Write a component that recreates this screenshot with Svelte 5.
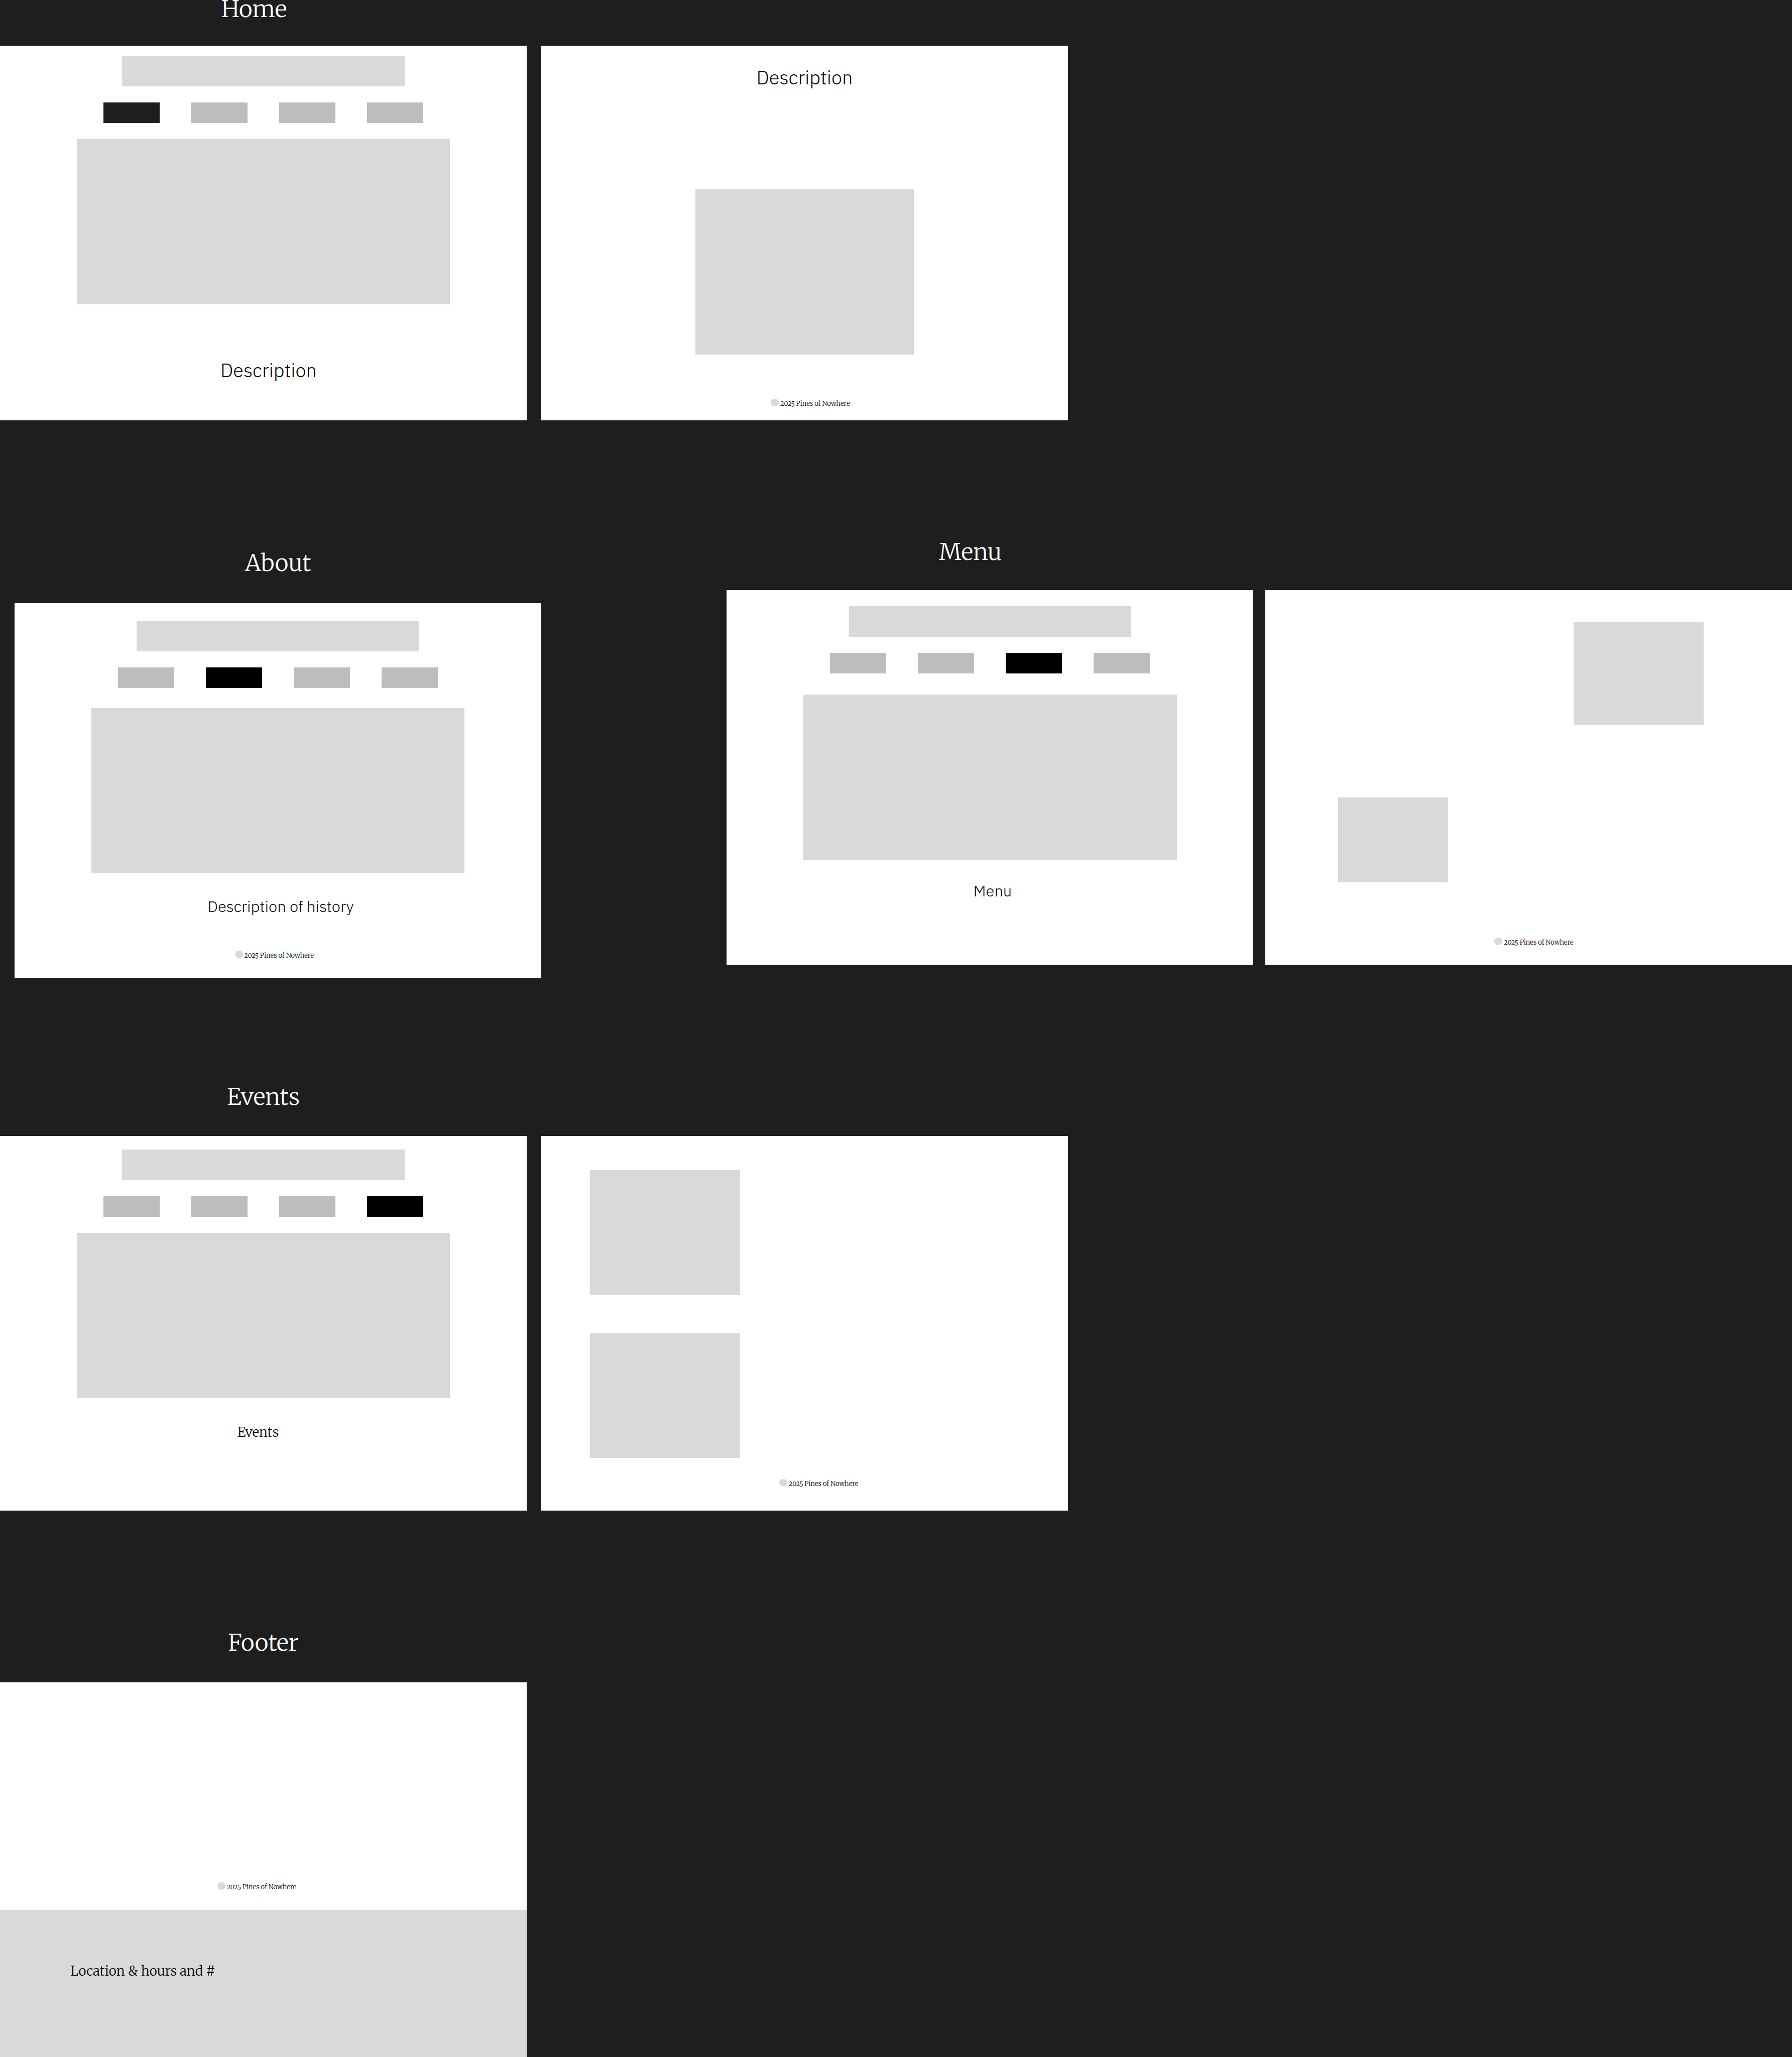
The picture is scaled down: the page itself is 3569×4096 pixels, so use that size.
<script>
  const pages = ['Home', 'About', 'Menu', 'Events'];
</script>

{#snippet masthead(active)}
  <div class="banner"></div>
  <nav class="tabs" aria-label="{active} wireframe">
    {#each pages as page}
      <a
        class="tab"
        class:current={page === active}
        class:soft={page === active && page === 'Home'}
        href="#{page.toLowerCase()}"
        aria-label={page}
      ></a>
    {/each}
  </nav>
  <div class="hero"></div>
{/snippet}

{#snippet copyright()}
  <footer class="copyright">
    <span class="mark"></span>
    <span>2025 Pines of Nowhere</span>
  </footer>
{/snippet}

<main class="board">
  <section class="row home" id="home">
    <div class="column">
      <h2 class="title">Home</h2>
      <article class="frame first">
        {@render masthead('Home')}
        <p class="caption large">Description</p>
      </article>
    </div>
    <article class="frame second">
      <p class="caption large">Description</p>
      <div class="picture"></div>
      {@render copyright()}
    </article>
  </section>

  <div class="row middle">
    <section class="column about" id="about">
      <h2 class="title">About</h2>
      <article class="frame">
        {@render masthead('About')}
        <p class="caption">Description of history</p>
        {@render copyright()}
      </article>
    </section>
    <section class="menu" id="menu">
      <div class="column">
        <h2 class="title">Menu</h2>
        <article class="frame first">
          {@render masthead('Menu')}
          <p class="caption">Menu</p>
        </article>
      </div>
      <article class="frame second">
        <div class="picture upper"></div>
        <div class="picture lower"></div>
        {@render copyright()}
      </article>
    </section>
  </div>

  <section class="row events" id="events">
    <div class="column">
      <h2 class="title">Events</h2>
      <article class="frame first">
        {@render masthead('Events')}
        <p class="caption serif">Events</p>
      </article>
    </div>
    <article class="frame second">
      <div class="picture"></div>
      <div class="picture"></div>
      {@render copyright()}
    </article>
  </section>

  <section class="row closing">
    <div class="column">
      <h2 class="title">Footer</h2>
      <article class="frame">
        {@render copyright()}
      </article>
      <div class="contact">
        <p class="caption serif">Location &amp; hours and #</p>
      </div>
    </div>
  </section>
</main>

<style>
  :global(body) {
    margin: 0;
    background: #1e1e1e;
  }

  .board {
    display: flex;
    flex-direction: column;
    min-height: 100vh;
    background: #1e1e1e;
    color: #000;
    font-family: Merriweather, "Liberation Serif", serif;
    font-weight: 300;
  }

  .row {
    display: grid;
    align-items: end;
  }

  .home,
  .events,
  .closing {
    grid-template-columns: 1440fr 40fr 1440fr 1980fr;
  }

  .home .second,
  .events .second {
    grid-column: 3;
  }

  .middle {
    grid-template-columns: 40fr 1440fr 507fr 2913fr;
    align-items: start;
    margin-top: 244px;
  }

  .about {
    grid-column: 2;
    margin-top: 22px;
  }

  .menu {
    grid-column: 4;
    display: grid;
    grid-template-columns: 1440fr 33fr 1440fr;
    align-items: end;
  }

  .menu .second {
    grid-column: 3;
  }

  .events {
    margin-top: 219px;
  }

  .closing {
    flex: 1;
    align-items: stretch;
    margin-top: 245px;
  }

  .column {
    display: flex;
    flex-direction: column;
    gap: 60px;
    min-width: 0;
  }

  .home .column {
    gap: 55px;
  }

  .about {
    gap: 62px;
  }

  .menu .column {
    gap: 58px;
  }

  .closing .column {
    gap: 0;
  }

  .title {
    margin: 0;
    color: #fff;
    font-size: 46px;
    font-weight: 300;
    line-height: 36px;
    text-align: center;
  }

  .home .title {
    padding-right: 37px;
  }

  .menu .title {
    padding-right: 78px;
  }

  .closing .title {
    margin-bottom: 61px;
  }

  .frame {
    box-sizing: border-box;
    display: flex;
    flex-direction: column;
    align-items: center;
    min-width: 0;
    min-height: 746px;
    background: #fff;
  }

  .banner {
    width: 53.6%;
    height: 61px;
    background: #d9d9d9;
  }

  .tabs {
    display: flex;
    justify-content: space-between;
    width: 60.7%;
    margin: 32px 0;
  }

  .tab {
    width: 17.6%;
    height: 41px;
    background: #bdbdbd;
  }

  .tab.current {
    background: #000;
  }

  .tab.soft {
    background: #1e1e1e;
  }

  .hero {
    width: 70.9%;
    height: 329px;
    background: #d9d9d9;
  }

  .picture {
    background: #d9d9d9;
  }

  .caption {
    margin: 0;
    font-family: "IBM Plex Sans", Roboto, sans-serif;
    font-size: 31px;
    line-height: 40px;
  }

  .caption.large {
    font-size: 38px;
    line-height: 50px;
  }

  .caption.serif {
    font-family: inherit;
    font-size: 26px;
    line-height: 34px;
  }

  .copyright {
    display: flex;
    gap: 3px;
    align-self: flex-start;
    margin-top: auto;
    font-size: 13px;
    font-variant-numeric: oldstyle-nums;
    line-height: 19px;
    white-space: nowrap;
  }

  .mark {
    width: 16px;
    height: 15px;
    border-radius: 50%;
    background: #d9d9d9;
  }

  /* Home */
  .home .first {
    padding-top: 20px;
  }

  .home .first .caption {
    margin-top: 106px;
    padding-left: 2%;
  }

  .home .second {
    padding: 38px 0 24px;
  }

  .home .picture {
    width: 41.5%;
    height: 329px;
    margin-top: 198px;
  }

  .home .copyright {
    margin-left: 43.6%;
  }

  /* About */
  .about .frame {
    padding: 35px 0;
  }

  .about .hero {
    margin-top: 8px;
  }

  .about .caption {
    margin-top: 46px;
    padding-left: 1%;
  }

  .about .copyright {
    margin-left: 41.8%;
  }

  /* Menu */
  .menu .first {
    padding-top: 32px;
  }

  .menu .hero {
    margin-top: 10px;
  }

  .menu .caption {
    margin-top: 42px;
    padding-left: 1%;
  }

  .menu .second {
    align-items: flex-start;
    padding: 64px 0 35px;
  }

  .menu .upper {
    width: 24.7%;
    height: 204px;
    margin-left: 58.5%;
  }

  .menu .lower {
    width: 20.9%;
    height: 169px;
    margin: 145px 0 0 13.8%;
  }

  .menu .copyright {
    margin-left: 43.5%;
  }

  /* Events */
  .events .first {
    padding-top: 27px;
  }

  .events .caption {
    margin-top: 51px;
    padding-right: 2%;
  }

  .events .second {
    align-items: flex-start;
    padding: 68px 0 44px;
  }

  .events .picture {
    width: 28.5%;
    height: 249px;
    margin-left: 9.25%;
  }

  .events .picture + .picture {
    margin-top: 75px;
  }

  .events .copyright {
    margin-left: 45.2%;
  }

  /* Footer */
  .closing .frame {
    min-height: 453px;
    padding-bottom: 36px;
  }

  .closing .copyright {
    margin-left: 41.25%;
  }

  .contact {
    flex: 1;
    padding: 105px 13.4% 154px;
    background: #d9d9d9;
  }
</style>
